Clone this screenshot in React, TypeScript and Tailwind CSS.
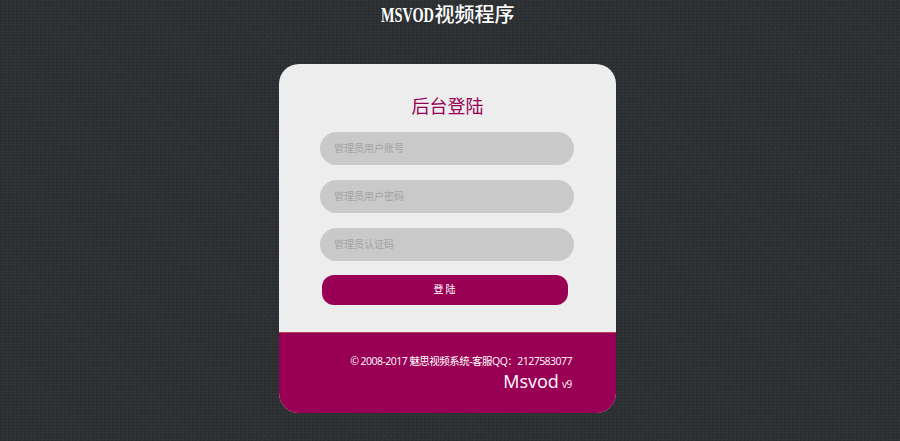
import React from "react";

const fields = ["管理员用户账号", "管理员用户密码", "管理员认证码"];

export default function App() {
  return (
    <div className="h-[441px] overflow-hidden bg-[#303336] bg-[repeating-linear-gradient(0deg,rgba(0,0,0,0.1)_0px,rgba(0,0,0,0.1)_1px,transparent_1px,transparent_3px),repeating-linear-gradient(90deg,rgba(0,0,0,0.09)_0px,rgba(0,0,0,0.09)_1px,transparent_1px,transparent_4px),repeating-linear-gradient(45deg,rgba(255,255,255,0.015)_0px,rgba(255,255,255,0.015)_1px,transparent_1px,transparent_5px)] font-['Open_Sans','Noto_Sans_CJK_SC',sans-serif]">
      <div className="w-[895px] flex flex-col items-center">
        <h1 className="h-[64px] pt-[1px] leading-[26px] text-[20px] font-medium text-white font-['Noto_Sans_CJK_SC',serif]">
          <span className="inline-block w-[54px] origin-left scale-x-[0.65] text-[22px] font-bold font-['Liberation_Serif',serif]">MSVOD</span>视频程序
        </h1>

        <div className="w-[337px] h-[349px] rounded-[20px] overflow-hidden flex flex-col bg-[#ededed]">
          <div className="h-[269px] flex flex-col items-center pt-[28px] border-b border-[#b5424f]">
            <h2 className="h-[40px] leading-[28px] text-[18px] text-[#990055]">后台登陆</h2>
            <div className="flex flex-col gap-[15px] mr-[1px]">
              {fields.map((f) => (
                <input
                  key={f}
                  placeholder={f}
                  className="w-[254px] h-[33px] rounded-full bg-[#c9c9c9] pl-[14px] pb-[2px] text-[10px] outline-none placeholder:text-[#a3a3a3]"
                />
              ))}
            </div>
            <button className="mt-[14px] mr-[6px] w-[246px] h-[30px] pb-[1px] pl-[2px] rounded-[12px] bg-[#990055] text-[10px] tracking-[2px] text-white">
              登陆
            </button>
          </div>

          <div className="flex-1 bg-[#990055] flex flex-col items-end pr-[44px] pt-[19px] text-white">
            <p className="text-[10.5px] tracking-[-0.53px] leading-[18px]">© 2008-2017 魅思视频系统-客服QQ：2127583077</p>
            <p className="leading-[26px] -mt-[2px]">
              <span className="text-[18px]">Msvod</span>
              <span className="text-[10px] tracking-[-0.3px] ml-[3px]">v9</span>
            </p>
          </div>
        </div>
      </div>
    </div>
  );
}
